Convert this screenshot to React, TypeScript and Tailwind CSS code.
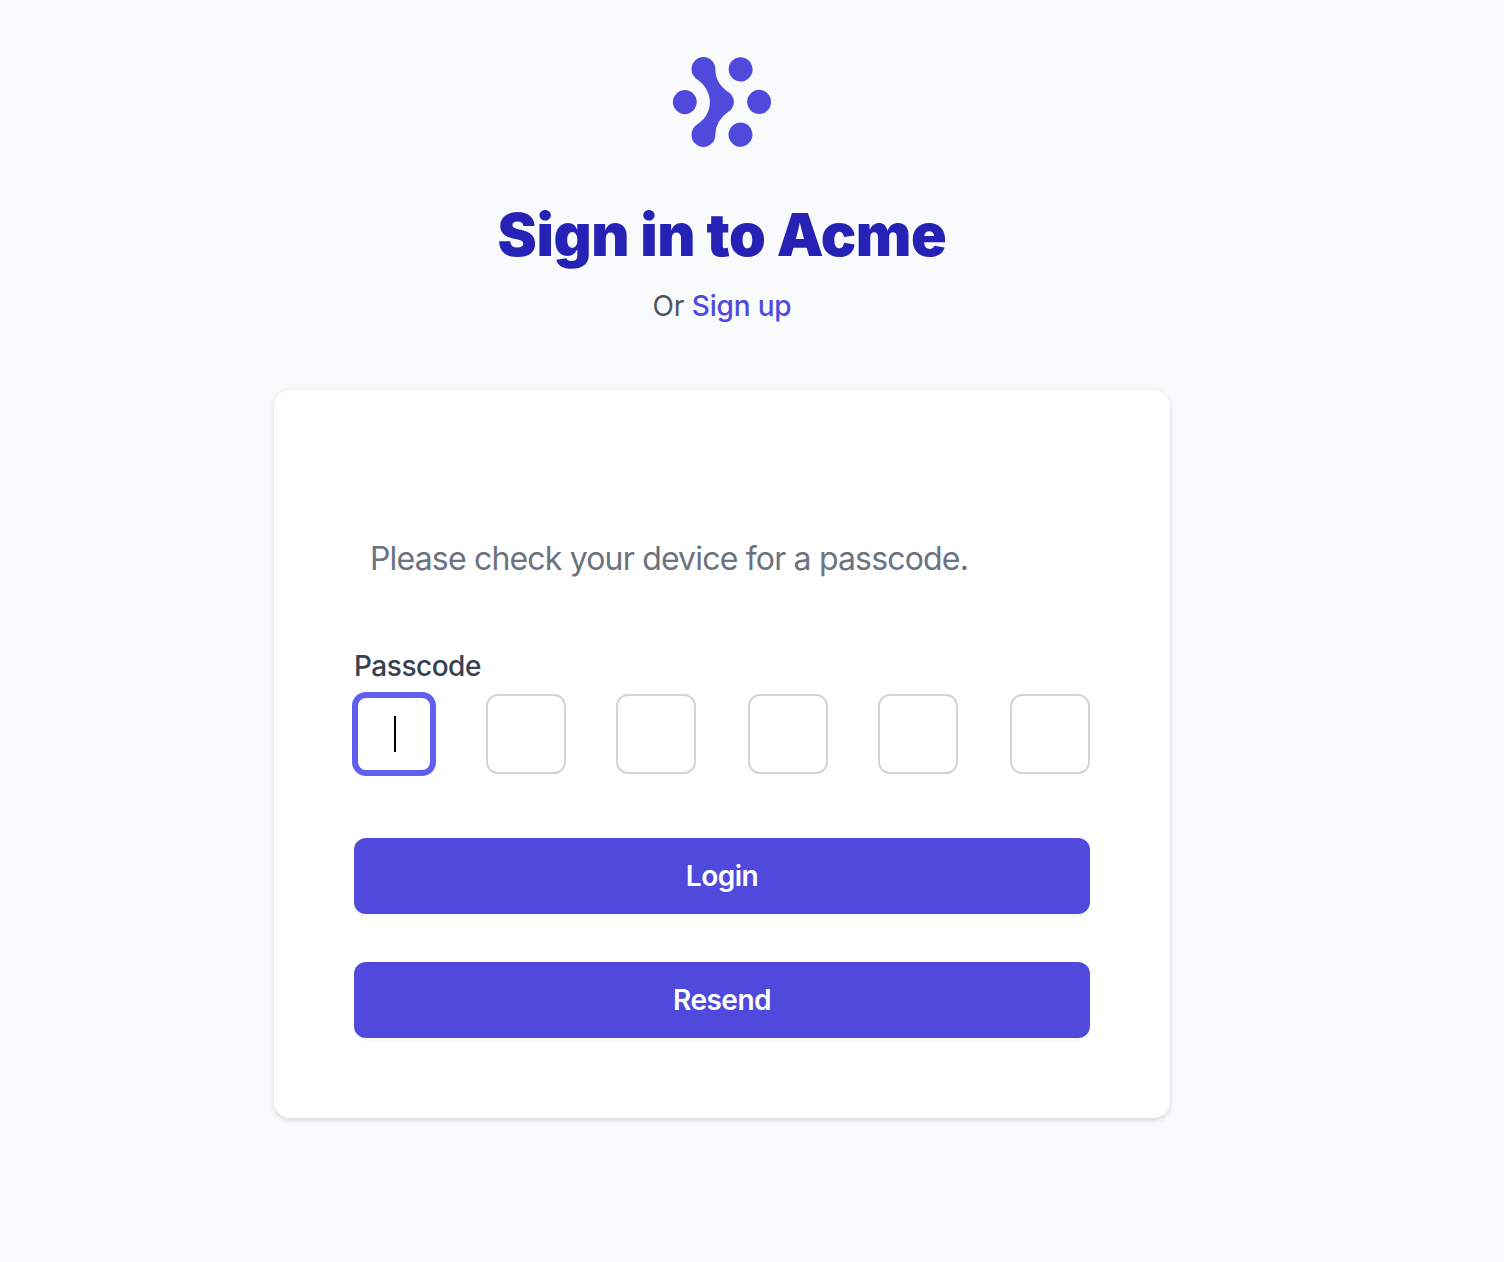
import { useState } from "react";

const LOGO_PATH =
  "M15.258 26.865a4.043 4.043 0 01-1.133 2.917A4.006 4.006 0 0111.253 31a3.992 3.992 0 01-2.872-1.218 4.028 4.028 0 01-1.133-2.917c.009-.698.2-1.382.557-1.981.356-.6.863-1.094 1.47-1.433l1.86-1.652a8.495 8.495 0 002.304-5.793c0-2.926-1.711-5.901-4.17-7.457A3.952 3.952 0 017.8 7.116a3.975 3.975 0 01-.557-1.98 4.042 4.042 0 011.133-2.918A4.006 4.006 0 0111.247 1a3.99 3.99 0 012.872 1.218 4.025 4.025 0 011.133 2.917 8.521 8.521 0 002.347 5.832l.817.8c.326.285.668.551 1.024.798.621.33 1.142.826 1.504 1.431a3.902 3.902 0 01-1.504 5.442a8.968 8.968 0 00-3.024 3.183 9.016 9.016 0 00-1.158 4.244zM19.741 5.123c0 .796.235 1.575.676 2.237a4.01 4.01 0 001.798 1.482 3.99 3.99 0 004.366-.873 4.042 4.042 0 00.869-4.386 4.02 4.02 0 00-1.476-1.806 3.994 3.994 0 00-5.058.501 4.038 4.038 0 00-1.175 2.845zM23.748 22.84c-.792 0-1.567.236-2.226.678a4.021 4.021 0 00-1.476 1.806 4.042 4.042 0 00.869 4.387 3.99 3.99 0 004.366.873A4.01 4.01 0 0027.08 29.1a4.039 4.039 0 00-.5-5.082 4 4 0 00-2.832-1.18zM34 15.994c0-.796-.235-1.574-.675-2.236a4.01 4.01 0 00-1.798-1.483 3.99 3.99 0 00-4.367.873 4.042 4.042 0 00-.869 4.387 4.02 4.02 0 001.476 1.806 3.993 3.993 0 002.226.678 4.003 4.003 0 002.832-1.18A4.04 4.04 0 0034 15.993zM5.007 11.969c-.793 0-1.567.236-2.226.678a4.021 4.021 0 00-1.476 1.807 4.042 4.042 0 00.869 4.386 4.001 4.001 0 004.366.873 4.011 4.011 0 001.798-1.483 4.038 4.038 0 00-.5-5.08 4.004 4.004 0 00-2.831-1.181z";

const DIGITS = [0, 1, 2, 3, 4, 5];

const Logo = () => (
  <svg
    viewBox="0 0 35 32"
    preserveAspectRatio="none"
    className="h-24 w-[104px] fill-[#4f4adb]"
  >
    <path d={LOGO_PATH} />
  </svg>
);

interface DigitBoxProps {
  active: boolean;
  onSelect: () => void;
}

const DigitBox = ({ active, onSelect }: DigitBoxProps) => {
  if (active) {
    return (
      <div className="flex size-20 items-center justify-center rounded-xl border-4 border-[#615fef] bg-white pl-0.5 ring-2 ring-[#615fef]">
        <span className="h-9 w-0.5 bg-black" />
      </div>
    );
  }

  return (
    <div
      onClick={onSelect}
      className="size-20 rounded-xl border-2 border-[#d1d5da] bg-white"
    />
  );
};

interface SubmitButtonProps {
  label: string;
}

const SubmitButton = ({ label }: SubmitButtonProps) => (
  <button
    type="button"
    className="flex h-[76px] w-full items-center justify-center rounded-xl bg-[#4f4adb] text-[28px] font-[560] tracking-[-0.5px] text-white shadow-[0_2px_4px_rgba(0,0,0,0.05)]"
  >
    {label}
  </button>
);

const App = () => {
  const [active, setActive] = useState(0);

  return (
    <div className="flex min-h-screen flex-col items-center bg-[#f9fafc] pt-[54px] pr-[60px] font-['Inter',sans-serif]">
      <Logo />

      <h1 className="mt-[49px] text-[59px] leading-[72px] font-[860] tracking-[-0.45px] text-[#2522b5]">
        Sign in to Acme
      </h1>
      <p className="mt-[15px] text-[28px] leading-10 tracking-[-0.2px] text-[#4b5563]">
        Or{" "}
        <a href="#" className="font-medium text-[#4f4adb]">
          Sign up
        </a>
      </p>

      <div className="mt-16 h-[728px] w-[896px] rounded-2xl bg-white px-20 pt-[134px] shadow-[0_2px_6px_rgba(0,0,0,0.1),0_2px_4px_rgba(0,0,0,0.06)]">
        <p className="pl-4 text-[32px] leading-[70px] tracking-[-0.82px] text-[#6b7280]">
          Please check your device for a passcode.
        </p>

        <div className="mt-[52px] text-[28px] leading-10 font-[540] tracking-[-0.48px] text-[#374151]">
          Passcode
        </div>
        <div className="mt-2 grid grid-cols-[132px_130px_132px_130px_132px_80px]">
          {DIGITS.map((digit) => (
            <DigitBox
              key={digit}
              active={digit === active}
              onSelect={() => setActive(digit)}
            />
          ))}
        </div>

        <div className="mt-16 flex flex-col gap-12">
          <SubmitButton label="Login" />
          <SubmitButton label="Resend" />
        </div>
      </div>
    </div>
  );
};

export default App;
